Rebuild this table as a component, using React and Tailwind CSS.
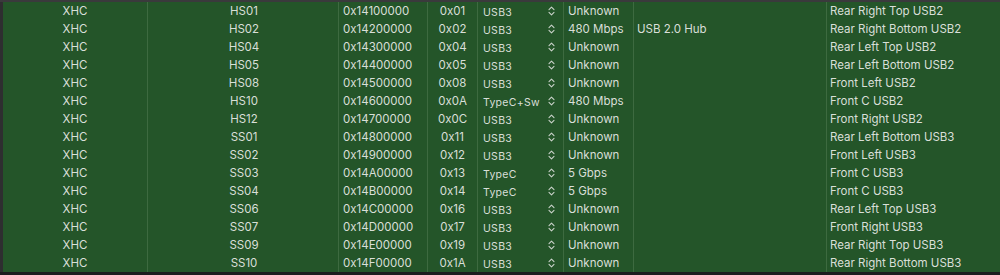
import React from "react";

const rows = [
  ["HS01", "0x14100000", "0x01", "USB3", "Unknown", "", "Rear Right Top USB2"],
  ["HS02", "0x14200000", "0x02", "USB3", "480 Mbps", "USB 2.0 Hub", "Rear Right Bottom USB2"],
  ["HS04", "0x14300000", "0x04", "USB3", "Unknown", "", "Rear Left Top USB2"],
  ["HS05", "0x14400000", "0x05", "USB3", "Unknown", "", "Rear Left Bottom USB2"],
  ["HS08", "0x14500000", "0x08", "USB3", "Unknown", "", "Front Left USB2"],
  ["HS10", "0x14600000", "0x0A", "TypeC+Sw", "480 Mbps", "", "Front C USB2"],
  ["HS12", "0x14700000", "0x0C", "USB3", "Unknown", "", "Front Right USB2"],
  ["SS01", "0x14800000", "0x11", "USB3", "Unknown", "", "Rear Left Bottom USB3"],
  ["SS02", "0x14900000", "0x12", "USB3", "Unknown", "", "Front Left USB3"],
  ["SS03", "0x14A00000", "0x13", "TypeC", "5 Gbps", "", "Front C USB3"],
  ["SS04", "0x14B00000", "0x14", "TypeC", "5 Gbps", "", "Front C USB3"],
  ["SS06", "0x14C00000", "0x16", "USB3", "Unknown", "", "Rear Left Top USB3"],
  ["SS07", "0x14D00000", "0x17", "USB3", "Unknown", "", "Front Right USB3"],
  ["SS09", "0x14E00000", "0x19", "USB3", "Unknown", "", "Rear Right Top USB3"],
  ["SS10", "0x14F00000", "0x1A", "USB3", "Unknown", "", "Rear Right Bottom USB3"],
];

// up/down chevrons of the popup button
const Stepper = () => (
  <svg width="7" height="10" viewBox="0 0 7 10" fill="none" stroke="#c9d2c9" strokeWidth="1.1" strokeLinecap="round" strokeLinejoin="round">
    <path d="M1 3.6 L3.5 1.2 L6 3.6" />
    <path d="M1 6.4 L3.5 8.8 L6 6.4" />
  </svg>
);

const cell = "h-[18px] flex items-center border-l border-[#3d6a40]";

export default function App() {
  return (
    <div className="w-[1000px] h-[275px] bg-[#1f1f1f] flex flex-col overflow-hidden" style={{ fontFamily: "Inter, 'Liberation Sans', sans-serif" }}>
      <div className="h-[2px] bg-[#3a3a3c]" />
      <div className="flex">
        <div className="w-[3px] bg-[#2e2e30]" />
        <div className="flex-1 bg-[#245529] text-[11.5px] text-[#d9dfd8] grid grid-cols-[144px_191px_89px_50px_86px_70px_193px_1fr]">
          {rows.map((r, i) => (
            <React.Fragment key={i}>
              <div className="h-[18px] flex items-center justify-center pt-[1px]">XHC</div>
              <div className={`${cell} justify-center pl-[2px] pt-[1px]`}>{r[0]}</div>
              <div className={`${cell} pl-[4px] pt-[1px]`}>{r[1]}</div>
              <div className={`${cell} justify-center pt-[1px]`}>{r[2]}</div>
              <div className={`${cell} pl-[5px] pr-[8px] justify-between`}>
                <span className="text-[10.5px] tracking-[0.3px] pt-[3px]">{r[3]}</span>
                <Stepper />
              </div>
              <div className={`${cell} pl-[4px] pt-[1px]`}>{r[4]}</div>
              <div className={`${cell} pl-[3px] pt-[1px]`}>{r[5]}</div>
              <div className={`${cell} pl-[3px] pt-[1px]`}>{r[6]}</div>
            </React.Fragment>
          ))}
        </div>
      </div>
      <div className="flex-1 bg-[#1c1c1e]" />
    </div>
  );
}
